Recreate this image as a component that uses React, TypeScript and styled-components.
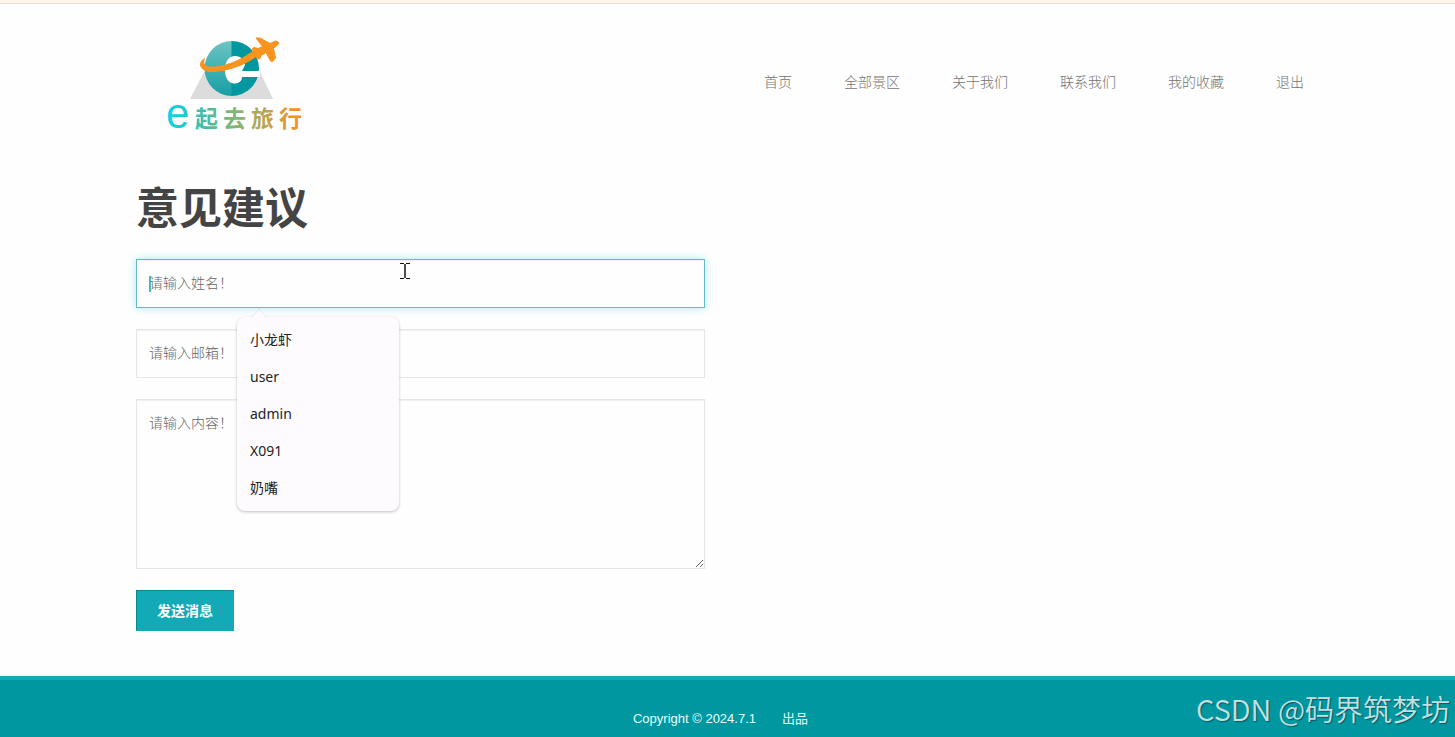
import React from "react";
import styled, { createGlobalStyle } from "styled-components";

const sans = `"Liberation Sans", "Noto Sans CJK SC", sans-serif`;
const cjk = `"Noto Sans CJK SC", sans-serif`;

const GlobalStyle = createGlobalStyle`
  *, *::before, *::after { box-sizing: border-box; }
  body { margin: 0; background: #fefefe; color: #444; font-family: ${cjk}; font-size: 14px; }
`;

const Page = styled.div`
  position: relative;
  display: flex;
  flex-direction: column;
  min-height: 100vh;
`;

const TopStrip = styled.div`
  height: 4px;
  background: #fff6ea;
  border-bottom: 1px solid #ecdccb;
`;

const Container = styled.div`
  width: 100%;
  max-width: 1183px;
  margin: 0 auto;
`;

const Header = styled(Container)`
  display: flex;
  align-items: center;
  justify-content: space-between;
  height: 155px;
  padding: 0 15px 0 24px;
`;

const LogoLink = styled.a`
  display: block;
  line-height: 0;
`;

const Nav = styled.nav`
  display: flex;
  gap: 52px;
  padding-bottom: 2px;
`;

const NavLink = styled.a`
  color: #737373;
  font-weight: 300;
  line-height: 20px;
  text-decoration: none;
  white-space: nowrap;
`;

const Main = styled(Container)`
  display: grid;
  grid-template-columns: 1fr 1fr;
  gap: 45px;
  padding: 24px 0 45px;
`;

const Title = styled.h1`
  margin: 0 0 32px;
  font-size: 43px;
  line-height: 44px;
  font-weight: 700;
  color: #444;
`;

const Form = styled.form`
  display: flex;
  flex-direction: column;
  align-items: flex-start;
  gap: 21px;
`;

const Field = styled.div`
  position: relative;
  display: flex;
  width: 100%;
`;

const control = `
  width: 100%;
  margin: 0;
  padding: 10px 12px 13px;
  border: 1px solid #e6e6e6;
  border-radius: 0;
  outline: none;
  background: #fefefe;
  box-shadow: inset 0 1px 1px rgba(0, 0, 0, 0.06);
  color: #555;
  font-family: ${cjk};
  font-size: 14px;
  line-height: 24px;
  &::placeholder { color: #666; font-weight: 300; opacity: 1; }
`;

const TextInput = styled.input<{ $active?: boolean }>`
  ${control}
  height: 49px;
  ${(p) =>
    p.$active &&
    `border-color: #66bcc2;
     box-shadow: inset 0 1px 1px rgba(0, 0, 0, 0.06), 0 0 8px rgba(0, 190, 200, 0.35);`}
`;

const TextArea = styled.textarea`
  ${control}
  height: 170px;
  resize: vertical;
`;

const Caret = styled.span`
  position: absolute;
  top: 17px;
  left: 13px;
  width: 2px;
  height: 16px;
  background: #4db5ba;
`;

const Pointer = styled.svg`
  position: absolute;
  top: 3px;
  left: 263px;
`;

const Suggestions = styled.ul`
  position: absolute;
  z-index: 2;
  top: 58px;
  left: 101px;
  width: 162px;
  margin: 0;
  padding: 4px 0 5px;
  list-style: none;
  background: #fdfbfe;
  border-radius: 8px;
  box-shadow: 0 1px 3px rgba(0, 0, 0, 0.25);
  &::before {
    content: "";
    position: absolute;
    top: -7px;
    left: 14px;
    border: solid transparent;
    border-width: 0 8px 8px;
    border-bottom-color: #fdfbfe;
    filter: drop-shadow(0 -1px 0 rgba(0, 0, 0, 0.08));
  }
`;

const Suggestion = styled.li`
  padding: 0 13px;
  color: #222;
  font-family: "Noto Sans", ${cjk};
  font-size: 14px;
  line-height: 37px;
`;

const SubmitButton = styled.button`
  height: 41px;
  padding: 0 20px 2px;
  border: 1px solid #13aab7;
  border-top-color: #0b8790;
  border-left-color: #0b8790;
  background: #13aab7;
  color: #fff;
  font-family: ${cjk};
  font-size: 14px;
  font-weight: 700;
`;

const Footer = styled.footer`
  display: flex;
  flex: 1;
  justify-content: center;
  gap: 26px;
  padding: 30px 14px 9px 0;
  border-top: 4px solid #13aab3;
  background: #0097a0;
  color: #e6ffff;
  font-family: ${sans};
  font-size: 13px;
  line-height: 18px;
`;

const Watermark = styled.div`
  position: absolute;
  right: 5px;
  bottom: 9px;
  color: #c4dfe1;
  font-family: ${cjk};
  font-size: 29px;
  font-weight: 350;
  line-height: 40px;
  text-shadow: 1px 1px 1px rgba(0, 0, 0, 0.4);
  white-space: nowrap;
`;

const navItems = ["首页", "全部景区", "关于我们", "联系我们", "我的收藏", "退出"];
const names = ["小龙虾", "user", "admin", "X091", "奶嘴"];

function Logo() {
  return (
    <svg width="144" height="113" viewBox="0 -9 144 113" role="img" aria-label="e起去旅行">
      <defs>
        <linearGradient id="word" gradientUnits="userSpaceOnUse" x1="6" y1="0" x2="142" y2="0">
          <stop offset="0" stopColor="#10d3e6" />
          <stop offset="0.15" stopColor="#22c8cf" />
          <stop offset="0.3" stopColor="#4bbd9e" />
          <stop offset="0.52" stopColor="#84b672" />
          <stop offset="0.78" stopColor="#c8a04c" />
          <stop offset="1" stopColor="#fa8f1e" />
        </linearGradient>
        <linearGradient id="half" x1="0" y1="0" x2="0" y2="1">
          <stop offset="0" stopColor="#6cc4c2" />
          <stop offset="1" stopColor="#159fa5" />
        </linearGradient>
      </defs>
      {/* road */}
      <path d="M30 65 44 38H100L113 65Z" fill="#dcdcdd" />
      {/* globe */}
      <path d="M72 7A27.500 27.500 0 0 0 72 62Z" fill="url(#half)" />
      <path d="M71.500 7A27.500 27.500 0 0 1 71.500 62Z" fill="#00979f" />
      <path
        d="M65 36C65 27 69 22 75 22C81 22 85 26 85 31L82 37H100V43H82C82 47 79 49.500 74.500 49.500C68.500 49.500 65 44 65 36Z"
        fill="#fefefe"
      />
      {/* flight trail */}
      <path
        d="M44.500 24.500C37 29 40 38.500 54 37.500C70 36.500 87 30 101 19L97 14.500C83 25 69 32 54 33C45 33.500 42 30.500 44.500 24.500Z"
        fill="#f7931e"
        stroke="#f7931e"
        strokeLinejoin="round"
      />
      {/* plane */}
      <path
        d="M96 4L100 4L110 9.500L115.500 7Q119 7 118.500 10L113.500 14.500L115.500 24L112.500 27.500L110.500 27L106 18.500L101 21.500L100 24.500L97.500 25L94 17L92 15.500L93.500 13.500L98 14.500L102.500 12.500Z"
        fill="#f7931e"
        stroke="#f7931e"
        strokeLinejoin="round"
      />
      <g fill="url(#word)">
        <text x="6" y="94" fontFamily="Liberation Sans, sans-serif" fontSize="42">e</text>
        <text x="35 63 91 119" y="93" fontFamily="Noto Sans CJK SC, sans-serif" fontSize="23" fontWeight="700">起去旅行</text>
      </g>
    </svg>
  );
}

export default function App() {
  return (
    <Page>
      <GlobalStyle />
      <TopStrip />
      <Header as="header">
        <LogoLink href="#"><Logo /></LogoLink>
        <Nav>{navItems.map((n) => <NavLink href="#" key={n}>{n}</NavLink>)}</Nav>
      </Header>
      <Main as="main">
        <section>
          <Title>意见建议</Title>
          <Form>
            <Field>
              <TextInput $active aria-label="姓名" placeholder="请输入姓名！" />
              <Caret />
              <Pointer width="12" height="18" viewBox="0 0 12 18" fill="none" stroke="#111" aria-hidden="true">
                <path d="M1 1.500H5M7 1.500H11M1 16.500H5M7 16.500H11" />
                <path d="M6 2V16" strokeWidth="1.500" />
              </Pointer>
              <Suggestions>{names.map((n) => <Suggestion key={n}>{n}</Suggestion>)}</Suggestions>
            </Field>
            <Field><TextInput type="email" aria-label="邮箱" placeholder="请输入邮箱！" /></Field>
            <Field><TextArea aria-label="内容" placeholder="请输入内容！" /></Field>
            <SubmitButton type="button">发送消息</SubmitButton>
          </Form>
        </section>
      </Main>
      <Footer><span>Copyright © 2024.7.1</span><span>出品</span></Footer>
      <Watermark>CSDN @码界筑梦坊</Watermark>
    </Page>
  );
}
